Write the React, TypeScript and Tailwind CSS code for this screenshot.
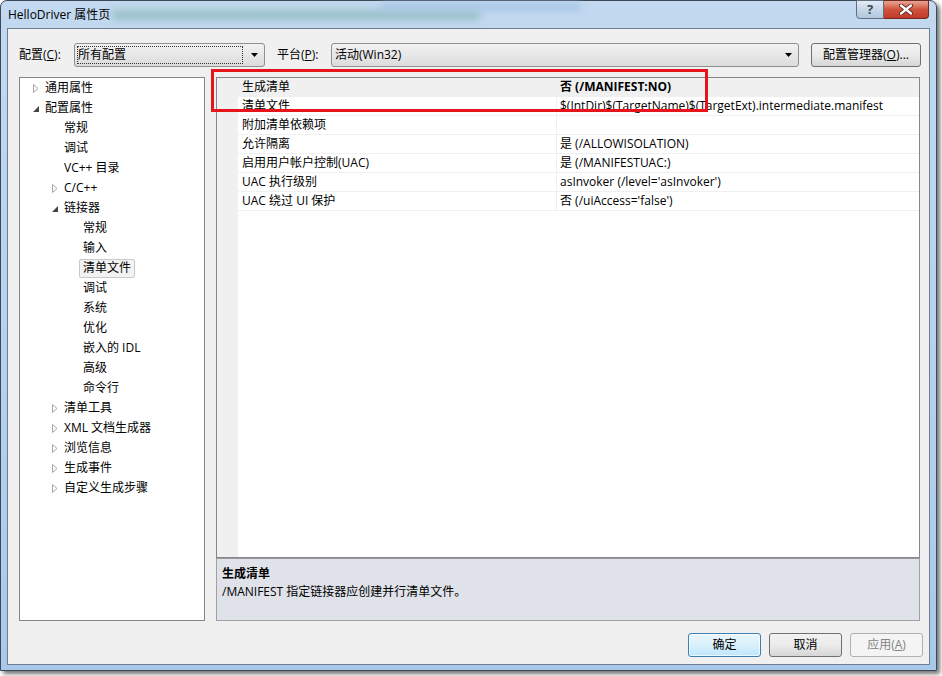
import React from 'react';

const FONT = "font-['Open_Sans','Noto_Sans_CJK_SC',sans-serif]";

interface TreeItem {
    label: string;
    level: number;
    arrow?: 'open' | 'closed';
    selected?: boolean;
}

const treeItems: TreeItem[] = [
    { label: '通用属性', level: 0, arrow: 'closed' },
    { label: '配置属性', level: 0, arrow: 'open' },
    { label: '常规', level: 1 },
    { label: '调试', level: 1 },
    { label: 'VC++ 目录', level: 1 },
    { label: 'C/C++', level: 1, arrow: 'closed' },
    { label: '链接器', level: 1, arrow: 'open' },
    { label: '常规', level: 2 },
    { label: '输入', level: 2 },
    { label: '清单文件', level: 2, selected: true },
    { label: '调试', level: 2 },
    { label: '系统', level: 2 },
    { label: '优化', level: 2 },
    { label: '嵌入的 IDL', level: 2 },
    { label: '高级', level: 2 },
    { label: '命令行', level: 2 },
    { label: '清单工具', level: 1, arrow: 'closed' },
    { label: 'XML 文档生成器', level: 1, arrow: 'closed' },
    { label: '浏览信息', level: 1, arrow: 'closed' },
    { label: '生成事件', level: 1, arrow: 'closed' },
    { label: '自定义生成步骤', level: 1, arrow: 'closed' },
];

const props: { name: string; value: string; selected?: boolean }[] = [
    { name: '生成清单', value: '否 (/MANIFEST:NO)', selected: true },
    { name: '清单文件', value: '$(IntDir)$(TargetName)$(TargetExt).intermediate.manifest' },
    { name: '附加清单依赖项', value: '' },
    { name: '允许隔离', value: '是 (/ALLOWISOLATION)' },
    { name: '启用用户帐户控制(UAC)', value: '是 (/MANIFESTUAC:)' },
    { name: 'UAC 执行级别', value: "asInvoker (/level='asInvoker')" },
    { name: 'UAC 绕过 UI 保护', value: "否 (/uiAccess='false')" },
];

const indent = ['pl-[13px]', 'pl-[32px]', 'pl-[51px]'];

const Arrow: React.FC<{ kind?: 'open' | 'closed' }> = ({ kind }) => (
    <span className="w-[8px] h-[20px] flex items-center shrink-0">
        {kind === 'closed' && (
            <svg width="6" height="9" viewBox="0 0 6 9">
                <polygon points="0.5,0.5 5,4.5 0.5,8.5" fill="#fff" stroke="#a6a6a6" strokeWidth="1" />
            </svg>
        )}
        {kind === 'open' && (
            <svg width="6" height="6" viewBox="0 0 6 6" className="mt-[2px]">
                <polygon points="6,0 6,6 0,6" fill="#444" />
            </svg>
        )}
    </span>
);

const Combo: React.FC<{ text: string; width: string; focus?: boolean }> = ({ text, width, focus }) => (
    <div className={`${width} h-[24px] rounded-[3px] border border-[#8e8f8f] bg-gradient-to-b from-[#f2f2f2] to-[#dcdcdc] flex items-center pl-[2px] pr-[6px]`}>
        <div className={`flex-1 h-[18px] flex items-center ${focus ? 'border border-dotted border-[#333]' : 'border border-transparent'}`}>
            {text}
        </div>
        <svg width="7" height="4" viewBox="0 0 7 4" className="ml-[8px]">
            <polygon points="0,0 7,0 3.5,4" fill="#000" />
        </svg>
    </div>
);

const App: React.FC = () => {
    return (
        <div className={`relative w-[942px] h-[676px] bg-white text-[12px] text-black ${FONT} overflow-hidden`}>
            {/* window frame */}
            <div className="w-[937px] h-[671px] rounded-t-[7px] border border-[#3c4a58] bg-gradient-to-b from-[#c2d9f0] via-[#b7d2ef] to-[#a9c9eb] shadow-[3px_3px_4px_rgba(0,0,0,0.55)] flex flex-col">
                {/* title bar */}
                <div className="relative h-[27px] flex items-center pl-[7px]">
                    <div className="absolute left-[110px] top-[9px] w-[370px] h-[10px] rounded-full bg-[#86b3b4] blur-[4px] opacity-70" />
                    <div className="absolute left-[380px] top-[2px] w-[200px] h-[8px] rounded-full bg-[#a9c8e6] blur-[3px]" />
                    <span className="relative leading-none">HelloDriver 属性页</span>
                    <div className="absolute top-[-1px] right-[7px] flex">
                        <div className="w-[28px] h-[19px] rounded-bl-[4px] border border-[#5f6d7c] bg-gradient-to-b from-[#e3ecf5] via-[#c6d6e6] to-[#b3c8de] flex items-center justify-center text-[13px] font-bold text-[#3c4a58] leading-none">?</div>
                        <div className="w-[45px] h-[19px] rounded-br-[4px] border border-l-0 border-[#6e2a22] bg-gradient-to-b from-[#e9a493] via-[#d0523c] to-[#c23a28] flex items-center justify-center">
                            <svg width="14" height="11" viewBox="0 0 14 11">
                                <path d="M2 1.5 L12 9.5 M12 1.5 L2 9.5" stroke="#4a1a14" strokeWidth="4" strokeLinecap="round" />
                                <path d="M2 1.5 L12 9.5 M12 1.5 L2 9.5" stroke="#fff" strokeWidth="2.4" strokeLinecap="round" />
                            </svg>
                        </div>
                    </div>
                </div>

                {/* client area */}
                <div className="mx-[6px] h-[637px] border border-[#6f7e8e] bg-[#f0f0f0] flex flex-col pt-[14px]">
                    {/* configuration row */}
                    <div className="flex items-center h-[24px] pl-[11px]">
                        <span className="w-[55px]">配置(<span className="underline">C</span>):</span>
                        <Combo text="所有配置" width="w-[191px]" focus />
                        <span className="w-[54px] ml-[12px]">平台(<span className="underline">P</span>):</span>
                        <Combo text="活动(Win32)" width="w-[468px]" />
                        <button className="ml-[12px] w-[110px] h-[24px] rounded-[3px] border border-[#707070] bg-gradient-to-b from-[#f2f2f2] via-[#ebebeb] to-[#d6d6d6]">
                            配置管理器(<span className="underline">O</span>)...
                        </button>
                    </div>

                    {/* panels */}
                    <div className="flex mt-[10px] pl-[11px] h-[544px]">
                        {/* tree */}
                        <div className="w-[186px] h-full border border-[#828790] bg-white">
                            {treeItems.map((item, i) => (
                                <div key={i} className={`flex items-center h-[20px] ${indent[item.level]}`}>
                                    <Arrow kind={item.arrow} />
                                    <span className={`h-[19px] flex items-center px-[3px] border rounded-[2px] whitespace-nowrap ${item.selected ? 'border-[#c9c9c9] bg-[#f2f2f2]' : 'border-transparent'}`}>
                                        {item.label}
                                    </span>
                                </div>
                            ))}
                        </div>

                        {/* property grid + description */}
                        <div className="ml-[11px] w-[704px] h-full flex flex-col">
                            <div className="h-[481px] border border-[#828790] bg-white flex">
                                <div className="w-[21px] bg-[#f0f0f0]" />
                                <div className="flex-1 flex flex-col">
                                    {props.map((p, i) => (
                                        <div key={i} className={`flex h-[19px] border-b border-[#f0f0f0] ${p.selected ? 'bg-[#f0f0f0]' : ''}`}>
                                            <div className="w-[319px] pl-[4px] flex items-center border-r border-[#f0f0f0] whitespace-nowrap">{p.name}</div>
                                            <div className={`flex-1 pl-[3px] flex items-center whitespace-nowrap ${p.selected ? 'font-bold' : ''}`}>{p.value}</div>
                                        </div>
                                    ))}
                                </div>
                            </div>
                            <div className="h-[63px] border border-[#a0a0a0] border-t-[#9a9a9a] bg-[#dfe2e8] px-[5px] pt-[6px] leading-[18px]">
                                <div className="font-bold">生成清单</div>
                                <div>/MANIFEST 指定链接器应创建并行清单文件。</div>
                            </div>
                        </div>
                    </div>

                    {/* buttons */}
                    <div className="flex justify-end gap-[8px] mt-[12px] pr-[6px]">
                        <button className="w-[73px] h-[24px] rounded-[3px] border border-[#3c7fb1] bg-gradient-to-b from-[#eaf6fd] via-[#d9f0fc] to-[#bee6fd] shadow-[inset_0_0_0_1px_rgba(255,255,255,0.7)]">确定</button>
                        <button className="w-[73px] h-[24px] rounded-[3px] border border-[#707070] bg-gradient-to-b from-[#f2f2f2] via-[#ebebeb] to-[#d6d6d6]">取消</button>
                        <button className="w-[73px] h-[24px] rounded-[3px] border border-[#adb2b5] bg-[#f4f4f4] text-[#838383]">应用(<span className="underline">A</span>)</button>
                    </div>
                </div>
            </div>

            {/* red annotation box */}
            <div className="absolute left-[211px] top-[69px] w-[497px] h-[43px] border-[3px] border-[#e8141c]" />
        </div>
    );
};

export default App;
